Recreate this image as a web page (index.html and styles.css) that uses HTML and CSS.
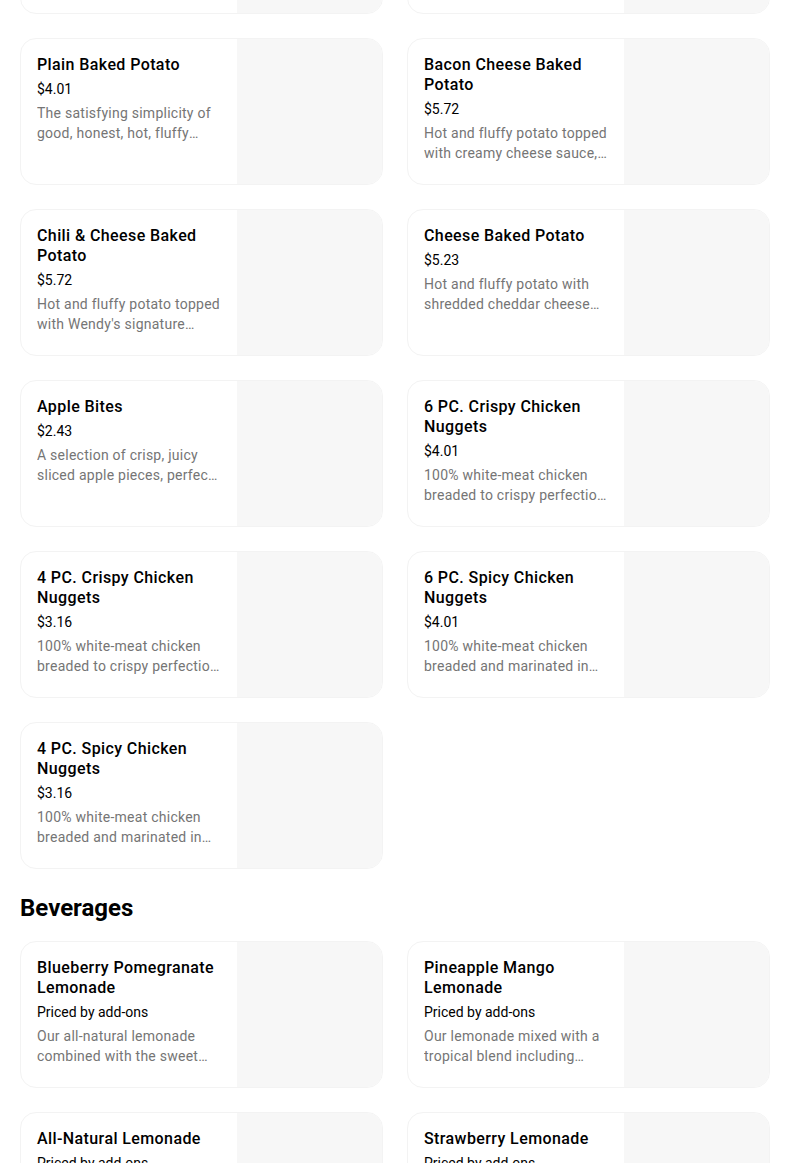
FILE: index.html
```html
<!DOCTYPE html>
<html lang="en">
<head>
<meta charset="utf-8">
<link rel="stylesheet" href="styles.css">
</head>
<body>
<main class="page">
  <section class="grid grid-top">
    <div class="card card-partial"><div class="info"></div><div class="thumb"></div></div>
    <div class="card card-partial"><div class="info"></div><div class="thumb"></div></div>

    <div class="card"><div class="info"><h3 class="title">Plain Baked Potato</h3><div class="price">$4.01</div><p class="desc">The satisfying simplicity of good, honest, hot, fluffy baked potato goodness.</p></div><div class="thumb"></div></div>
    <div class="card"><div class="info"><h3 class="title">Bacon Cheese Baked Potato</h3><div class="price">$5.72</div><p class="desc">Hot and fluffy potato topped with creamy cheese sauce, shredded cheddar and crispy bacon.</p></div><div class="thumb"></div></div>

    <div class="card"><div class="info"><h3 class="title">Chili &amp; Cheese Baked Potato</h3><div class="price">$5.72</div><p class="desc">Hot and fluffy potato topped with Wendy's signature homestyle chili and shredded cheddar cheese.</p></div><div class="thumb"></div></div>
    <div class="card"><div class="info"><h3 class="title">Cheese Baked Potato</h3><div class="price">$5.23</div><p class="desc">Hot and fluffy potato with shredded cheddar cheese and warm cheese sauce.</p></div><div class="thumb"></div></div>

    <div class="card"><div class="info"><h3 class="title">Apple Bites</h3><div class="price">$2.43</div><p class="desc">A selection of crisp, juicy sliced apple pieces, perfect for snacking on the go.</p></div><div class="thumb"></div></div>
    <div class="card"><div class="info"><h3 class="title">6 PC. Crispy Chicken Nuggets</h3><div class="price">$4.01</div><p class="desc">100% white-meat chicken breaded to crispy perfection and served with your choice of sauce.</p></div><div class="thumb"></div></div>

    <div class="card"><div class="info"><h3 class="title">4 PC. Crispy Chicken Nuggets</h3><div class="price">$3.16</div><p class="desc">100% white-meat chicken breaded to crispy perfection and served with your choice of sauce.</p></div><div class="thumb"></div></div>
    <div class="card"><div class="info"><h3 class="title">6 PC. Spicy Chicken Nuggets</h3><div class="price">$4.01</div><p class="desc">100% white-meat chicken breaded and marinated in spicy seasoning.</p></div><div class="thumb"></div></div>

    <div class="card"><div class="info"><h3 class="title">4 PC. Spicy Chicken Nuggets</h3><div class="price">$3.16</div><p class="desc">100% white-meat chicken breaded and marinated in spicy seasoning.</p></div><div class="thumb"></div></div>
  </section>

  <h2 class="section-title">Beverages</h2>

  <section class="grid">
    <div class="card"><div class="info"><h3 class="title">Blueberry Pomegranate Lemonade</h3><div class="price">Priced by add-ons</div><p class="desc">Our all-natural lemonade combined with the sweet flavors of blueberry and pomegranate.</p></div><div class="thumb"></div></div>
    <div class="card"><div class="info"><h3 class="title">Pineapple Mango Lemonade</h3><div class="price">Priced by add-ons</div><p class="desc">Our lemonade mixed with a tropical blend including pineapple and mango.</p></div><div class="thumb"></div></div>

    <div class="card"><div class="info"><h3 class="title">All-Natural Lemonade</h3><div class="price">Priced by add-ons</div><p class="desc">Made with real lemon juice and sweetened just right.</p></div><div class="thumb"></div></div>
    <div class="card"><div class="info"><h3 class="title">Strawberry Lemonade</h3><div class="price">Priced by add-ons</div><p class="desc">Our all-natural lemonade with real strawberry flavor.</p></div><div class="thumb"></div></div>
  </section>
</main>
</body>
</html>
```
FILE: styles.css
```css
html, body {
  margin: 0;
  padding: 0;
  background: #ffffff;
}
body {
  font-family: Roboto, "Liberation Sans", Arial, sans-serif;
  color: #000;
  overflow: hidden;
}
.page {
  width: 750px;
  margin-left: 20px;
  margin-top: -133px;
}
.grid {
  display: grid;
  grid-template-columns: 1fr 1fr;
  column-gap: 24px;
  row-gap: 24px;
}
.card {
  display: flex;
  height: 147px;
  box-sizing: border-box;
  border: 1px solid #f3f3f3;
  border-radius: 16px;
  overflow: hidden;
  background: #fff;
}
.info {
  flex: 1;
  min-width: 0;
  padding: 16px 16px 0 16px;
}
.thumb {
  width: 145px;
  flex: none;
  background: #f7f7f7;
}
.title {
  margin: 0;
  font-size: 16px;
  line-height: 20px;
  font-weight: 500;
  letter-spacing: 0.4px;
  color: #000;
}
.price {
  margin-top: 4px;
  font-size: 14px;
  line-height: 20px;
  color: #000;
}
.desc {
  margin: 4px 0 0 0;
  font-size: 14px;
  line-height: 20px;
  letter-spacing: 0.25px;
  color: #757575;
  display: -webkit-box;
  -webkit-line-clamp: 2;
  -webkit-box-orient: vertical;
  overflow: hidden;
}
.section-title {
  margin: 23px 0 17px 0;
  font-size: 24px;
  line-height: 32px;
  font-weight: 700;
}
```
